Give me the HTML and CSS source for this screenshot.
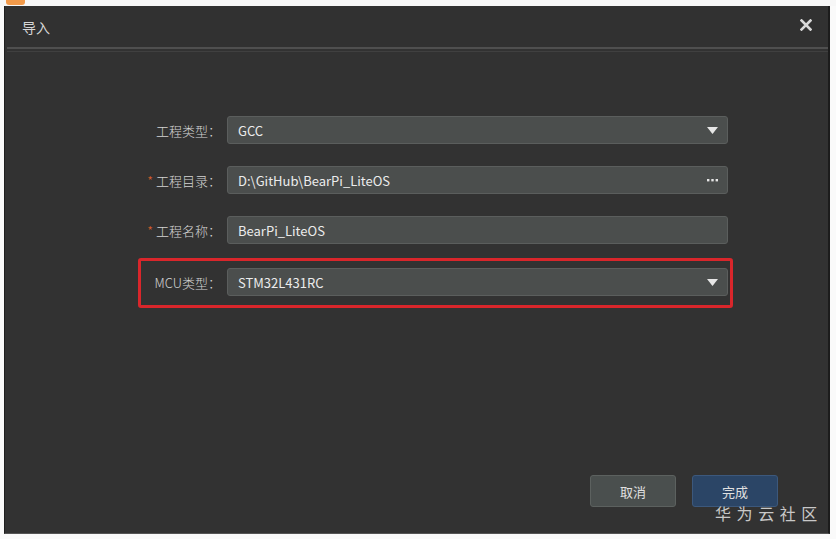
FILE: index.html
```html
<!DOCTYPE html>
<html lang="zh">
<head>
<meta charset="utf-8">
<title>导入</title>
<link rel="stylesheet" href="styles.css">
</head>
<body>
<div class="topstrip"><span class="tab"></span></div>
<div class="dialog">
  <div class="titlebar">
    <span class="title">导入</span>
    <span class="close">
      <svg width="12" height="12" viewBox="0 0 12 12"><path d="M1.5 1.5 L10.5 10.5 M10.5 1.5 L1.5 10.5" stroke="#d8d8d8" stroke-width="2.6" stroke-linecap="square"/></svg>
    </span>
  </div>
  <div class="sep"></div>
  <div class="form">
    <div class="row">
      <label class="lbl">工程类型：</label>
      <div class="field">
        <span class="val">GCC</span>
        <svg class="arrow" width="11" height="7" viewBox="0 0 11 7"><path d="M0 0 H11 L5.5 7 Z" fill="#e6e6e6"/></svg>
      </div>
    </div>
    <div class="row">
      <label class="lbl"><span class="req">*</span>工程目录：</label>
      <div class="field">
        <span class="val">D:\GitHub\BearPi_LiteOS</span>
        <svg class="dots" width="11" height="3" viewBox="0 0 11 3"><rect x="0" y="0" width="2.4" height="2.4" fill="#e6e6e6"/><rect x="4.3" y="0" width="2.4" height="2.4" fill="#e6e6e6"/><rect x="8.6" y="0" width="2.4" height="2.4" fill="#e6e6e6"/></svg>
      </div>
    </div>
    <div class="row">
      <label class="lbl"><span class="req">*</span>工程名称：</label>
      <div class="field">
        <span class="val">BearPi_LiteOS</span>
      </div>
    </div>
    <div class="row hl">
      <label class="lbl">MCU类型：</label>
      <div class="field">
        <span class="val">STM32L431RC</span>
        <svg class="arrow" width="11" height="7" viewBox="0 0 11 7"><path d="M0 0 H11 L5.5 7 Z" fill="#e6e6e6"/></svg>
      </div>
    </div>
  </div>
  <div class="footer">
    <button class="btn cancel">取消</button>
    <button class="btn ok">完成</button>
  </div>
  <div class="watermark">华 为 云 社 区</div>
</div>
</body>
</html>
```

FILE: styles.css
```css
html, body {
  margin: 0;
  padding: 0;
  background: #fafafa;
  width: 836px;
  height: 539px;
  overflow: hidden;
  font-family: "Noto Sans CJK SC", "Noto Sans", sans-serif;
}
.topstrip {
  height: 6px;
  background: #f7f7f7;
  position: relative;
}
.tab {
  position: absolute;
  left: 6px;
  top: 0;
  width: 19px;
  height: 5px;
  background: #f29a4a;
  border-radius: 0 0 3px 3px;
}
.dialog {
  position: relative;
  margin-left: 4px;
  width: 826px;
  height: 528px;
  background: #323232;
  border-left: 1px solid #1f1f1f;
  border-right: 2px solid #1c1c1c;
  border-bottom: 1px solid #555;
  box-sizing: border-box;
}
.titlebar {
  height: 41px;
  display: flex;
  align-items: center;
  justify-content: space-between;
  padding: 0 16px 0 17px;
  background: #313131;
}
.title {
  color: #d6d6d6;
  font-size: 14px;
}
.close {
  display: flex;
  align-items: center;
  margin-top: -4px;
}
.sep {
  height: 2px;
  border-top: 2px solid #4f4f4f;
  border-bottom: 1px solid #404040;
  margin: 0 0 0 2px;
}
.form {
  display: flex;
  flex-direction: column;
  gap: 22px;
  padding: 64px 0 0 0;
}
.row {
  display: flex;
  align-items: center;
  height: 28px;
}
.lbl {
  width: 222px;
  text-align: right;
  color: #d4d4d4;
  font-size: 13px;
  font-weight: 300;
  padding-right: 6px;
  box-sizing: border-box;
}
.req {
  color: #e0622a;
  margin-right: 3px;
}
.field {
  width: 501px;
  height: 28px;
  box-sizing: border-box;
  background: #4b4e4d;
  border: 1px solid #5b5e5d;
  border-radius: 3px;
  display: flex;
  align-items: center;
  justify-content: space-between;
  padding: 0 8px 0 10px;
  color: #ececec;
  font-size: 13px;
}
.arrow {
  margin-right: 1px;
}
.dots {
  margin-right: 1px;
}
.hl {
  position: relative;
  margin-top: 2px;
}
.hl::before {
  content: "";
  position: absolute;
  left: 133px;
  top: -10px;
  width: 595px;
  height: 50px;
  box-sizing: border-box;
  border: 3px solid #d9262b;
  border-radius: 3px;
  pointer-events: none;
}
.footer {
  position: absolute;
  left: 585px;
  top: 469px;
  display: flex;
  gap: 16px;
}
.btn {
  width: 86px;
  height: 32px;
  border-radius: 3px;
  font-family: "Noto Sans CJK SC", sans-serif;
  font-size: 13px;
  color: #e0e0e0;
  padding: 0;
}
.cancel {
  background: #4a4f4e;
  border: 1px solid #5c615f;
}
.ok {
  background: #2b4566;
  border: 1px solid #3c587c;
}
.watermark {
  position: absolute;
  left: 710px;
  top: 495px;
  color: #c8c8c8;
  font-size: 16px;
  letter-spacing: 1px;
  white-space: nowrap;
}
```
